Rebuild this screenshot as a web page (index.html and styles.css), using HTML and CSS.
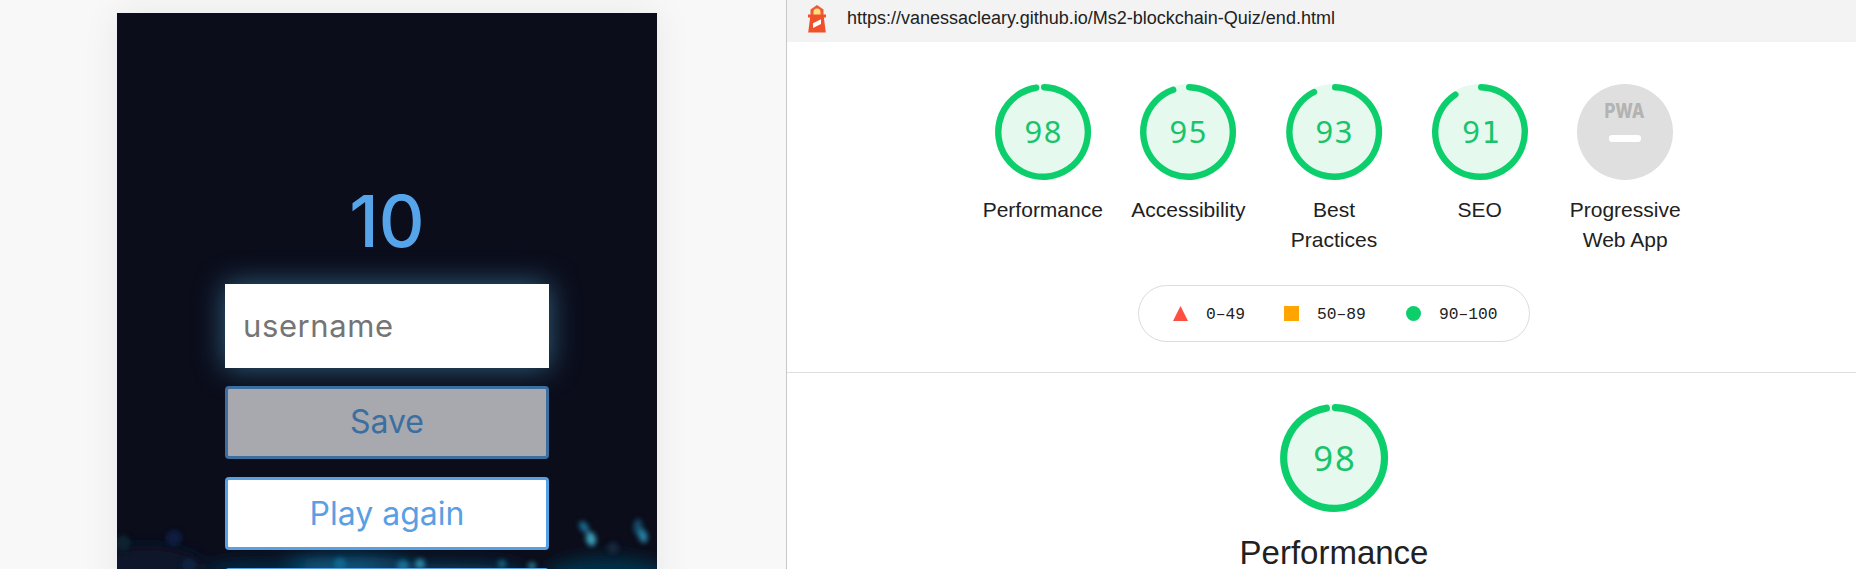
FILE: index.html
```html
<!DOCTYPE html>
<html lang="en">
<head>
<meta charset="utf-8">
<title>Lighthouse report</title>
<link rel="stylesheet" href="styles.css">
</head>
<body>
<main class="split">
  <section class="preview">
    <div class="device">
      <svg class="bokeh" viewBox="0 0 540 556" aria-hidden="true">
        <defs>
          <filter id="soft" filterUnits="userSpaceOnUse" x="-60" y="400" width="660" height="260"><feGaussianBlur stdDeviation="2.6"/></filter>
          <filter id="wide" filterUnits="userSpaceOnUse" x="-100" y="400" width="760" height="260"><feGaussianBlur stdDeviation="8"/></filter>
        </defs>
        <g filter="url(#wide)">
          <ellipse cx="230" cy="556" rx="80" ry="13" fill="#07567f"/>
          <ellipse cx="330" cy="560" rx="80" ry="10" fill="#073a5a"/>
          <ellipse cx="140" cy="558" rx="50" ry="10" fill="#062c46"/>
          <ellipse cx="490" cy="562" rx="60" ry="18" fill="#06324a"/>
          <ellipse cx="30" cy="558" rx="60" ry="26" fill="#08172a"/>
        </g>
        <g filter="url(#soft)">
          <circle cx="57" cy="525" r="8" fill="#0f1d3f"/>
          <circle cx="6" cy="530" r="8" fill="#07222f"/>
          <circle cx="72" cy="552" r="7" fill="#0d2340"/>
          <ellipse cx="467" cy="514" rx="4" ry="6.500" fill="#1c6a90" transform="rotate(-35 467 514)"/>
          <ellipse cx="474" cy="526" rx="5" ry="7" fill="#3ba0bb" transform="rotate(-15 474 526)"/>
          <ellipse cx="521" cy="514" rx="4.500" ry="8" fill="#124d6c"/>
          <ellipse cx="526" cy="523" rx="4.500" ry="7" fill="#2780a4" transform="rotate(-15 526 523)"/>
          <circle cx="496" cy="535" r="6" fill="#18273c"/>
          <circle cx="223" cy="551" r="6" fill="#10678f"/>
          <circle cx="303" cy="551" r="5" fill="#2a87a5"/>
          <circle cx="286" cy="553" r="6" fill="#177097"/>
          <circle cx="385" cy="551" r="4" fill="#176482"/>
          <circle cx="415" cy="553" r="4" fill="#2b7287"/>
        </g>
      </svg>
      <div class="score">10</div>
      <div class="field"><span class="username">username</span></div>
      <div class="btn btn-disabled"><span class="save">Save</span></div>
      <div class="btn"><span class="again">Play again</span></div>
      <div class="btn"></div>
    </div>
  </section>
  <section class="report">
    <header class="topbar">
      <svg class="lighthouse" viewBox="0 0 18 28">
        <path d="M9 0l6.500 4.500V10h-13V4.500z" fill="#ee5a36"/>
        <path d="M5.500 10V7a3.500 3.500 0 0 1 7 0v3z" fill="#ffdf80"/>
        <path d="M0 9.500h18v3H0zM2.200 12h13.600l2 15.500H.2z" fill="#f0502a"/>
        <path d="M5 18.200l8-4v4.800l-8 4z" fill="#fff"/>
      </svg>
      <span class="url">https://vanessacleary.github.io/Ms2-blockchain-Quiz/end.html</span>
    </header>
    <div class="gauges">
      <div class="gauge">
        <svg class="dial" viewBox="0 0 120 120"><circle class="base" cx="60" cy="60" r="56"/><path class="arc" d="M61.500 4A56 56 0 1 1 51.500 4.650"/><text class="num" x="61" y="74">98</text></svg>
        <span class="label">Performance</span>
      </div>
      <div class="gauge">
        <svg class="dial" viewBox="0 0 120 120"><circle class="base" cx="60" cy="60" r="56"/><path class="arc" d="M61.500 4A56 56 0 1 1 41.500 7.150"/><text class="num" x="61" y="74">95</text></svg>
        <span class="label">Accessibility</span>
      </div>
      <div class="gauge">
        <svg class="dial" viewBox="0 0 120 120"><circle class="base" cx="60" cy="60" r="56"/><path class="arc" d="M61.500 4A56 56 0 1 1 35 10"/><text class="num" x="61" y="74">93</text></svg>
        <span class="label">Best Practices</span>
      </div>
      <div class="gauge">
        <svg class="dial" viewBox="0 0 120 120"><circle class="base" cx="60" cy="60" r="56"/><path class="arc" d="M61.500 4A56 56 0 1 1 29.200 13.200"/><text class="num" x="61" y="74">9<tspan class="one">1</tspan></text></svg>
        <span class="label">SEO</span>
      </div>
      <div class="gauge">
        <svg class="dial" viewBox="0 0 96 96">
          <circle cx="48" cy="48" r="48" fill="#dfdfdf"/>
          <text class="pwa" x="27.500" y="34" textLength="40" lengthAdjust="spacingAndGlyphs">PWA</text>
          <rect x="32" y="51" width="32" height="7" rx="3" fill="#fff"/>
        </svg>
        <span class="label">Progressive Web App</span>
      </div>
    </div>
    <div class="legend">
      <svg class="mark" viewBox="0 0 15 15"><path d="M7.500 0L15 15H0z" fill="#ff4e42"/></svg><span class="range r1">0–49</span>
      <svg class="mark" viewBox="0 0 15 15"><path d="M0 0h15v15H0z" fill="#ffa400"/></svg><span class="range r2">50–89</span>
      <svg class="mark" viewBox="0 0 15 15"><circle cx="7.500" cy="7.500" r="7.500" fill="#0cce6b"/></svg><span class="range">90–100</span>
    </div>
    <div class="category">
      <div class="category-head">
        <svg class="dial dial-large" viewBox="0 0 120 120"><circle class="base" cx="60" cy="60" r="56"/><path class="arc" d="M61.500 4A56 56 0 1 1 51.500 4.650"/><text class="num" x="61" y="74">98</text></svg>
        <h1 class="title">Performance</h1>
      </div>
    </div>
  </section>
</main>
</body>
</html>
```
FILE: styles.css
```css
* { box-sizing: border-box; }
body { margin: 0; height: 569px; overflow: hidden; background: #fff; font-family: "Liberation Sans", Arial, sans-serif; color: #212121; }
.split { display: flex; height: 569px; overflow: hidden; }
.preview { width: 786px; flex: none; padding: 13px 0 0 117px; background: #f8f8f8; }
.device { position: relative; width: 540px; height: 700px; padding: 166px 108px 0; background: #0b0d1b; box-shadow: 0 0 0 1px #f0f1f6, 0 0 36px rgba(0,0,0,.07); display: flex; flex-direction: column; gap: 18px; font-family: Inter, sans-serif; }
.bokeh { position: absolute; left: 0; top: 0; width: 540px; height: 556px; overflow: hidden; }
.score { position: relative; flex: none; height: 87px; line-height: 84px; text-align: center; font-size: 71px; font-weight: 500; color: #56a5eb; letter-spacing: 0; }
.field { position: relative; flex: none; height: 84px; background: #fff; box-shadow: 0 0 29px rgba(86,185,235,.5); padding: 0 0 2px 18px; display: flex; align-items: center; font-size: 31px; letter-spacing: .6px; color: #757575; }
.btn { position: relative; height: 73px; flex: none; border: 3px solid #56a0e3; border-radius: 4px; background: #fff; display: flex; align-items: center; justify-content: center; font-size: 32px; color: #5a9fe3; }
.btn-disabled { background: #a8a9af; border-color: #3c6fa0; color: #3c6fa0; padding-bottom: 2px; }
.report { flex: 1; border-left: 1px solid #c8c8c8; background: #fff; }
.topbar { height: 42px; background: #f3f3f3; display: flex; padding: 5px 0 0 21px; }
.lighthouse { width: 18px; height: 28px; flex: none; }
.url { margin-left: 21px; font-size: 18px; line-height: 26px; white-space: nowrap; }
.gauges { display: flex; width: 728px; margin: 42px 0 0 183px; height: 201px; }
.gauge { width: 145.600px; display: flex; flex-direction: column; align-items: center; }
.dial { width: 96px; height: 96px; overflow: visible; }
.base { fill: #e6f9ef; stroke: #e6f9ef; stroke-width: 8; }
.arc { fill: none; stroke: #0cce6b; stroke-width: 8; stroke-linecap: round; }
.num { font-family: "Noto Sans", sans-serif; font-size: 38.500px; letter-spacing: 2px; text-anchor: middle; fill: #18c46a; }
.one { font-family: "DejaVu Sans Mono", monospace; font-size: 37.500px; letter-spacing: 0; }
.pwa { font-family: Inter, sans-serif; font-size: 20px; font-weight: 800; fill: #b3b3b3; }
.label { width: 122px; margin-top: 15px; font-size: 21px; line-height: 30px; text-align: center; }
.legend { width: 392px; height: 57px; margin: 0 0 0 351px; border: 1px solid #dcdcdc; border-radius: 29px; display: flex; align-items: center; padding-left: 34px; font-family: "Liberation Mono", monospace; font-size: 16.300px; }
.mark { width: 15px; height: 15px; margin-right: 18px; flex: none; }
.range { line-height: 20px; padding-top: 2px; }
.r1 { width: 78px; }
.r2 { width: 89px; }
.category { margin-top: 30px; border-top: 1px solid #dedede; padding-top: 31px; }
.category-head { width: 1094px; display: flex; flex-direction: column; align-items: center; }
.dial-large { width: 108px; height: 108px; }
.title { margin: 26px 0 0; font-size: 33px; line-height: 30px; font-weight: 400; }
```
